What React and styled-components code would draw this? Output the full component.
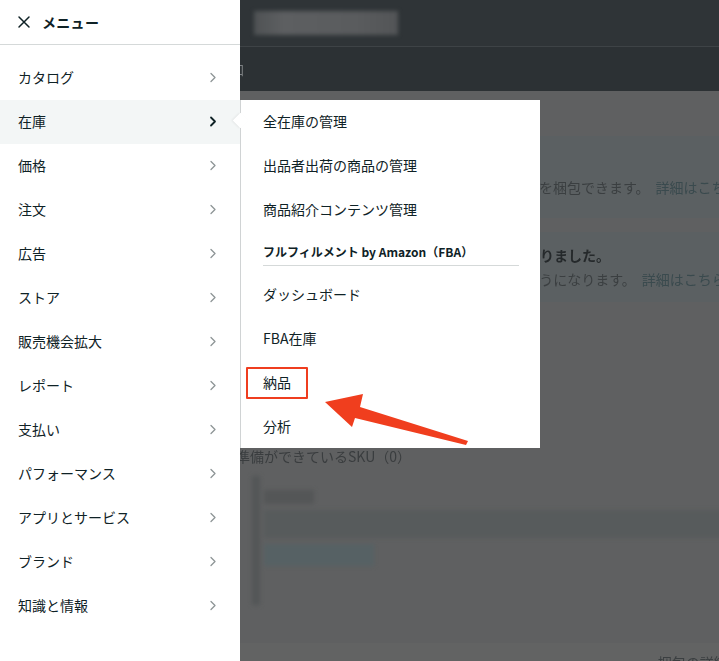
import React from 'react';
import styled, { createGlobalStyle } from 'styled-components';

const GlobalStyle = createGlobalStyle`
  html, body {
    margin: 0;
    padding: 0;
    background: #5f6061;
  }
  body {
    font-family: "Noto Sans CJK JP", "Noto Sans", sans-serif;
  }
`;

const Page = styled.div`
  position: relative;
  display: flex;
  width: 719px;
  height: 661px;
  overflow: hidden;
`;

const Sidebar = styled.aside`
  width: 240px;
  flex: none;
  background: #fff;
  display: flex;
  flex-direction: column;
`;

const SideHeader = styled.div`
  height: 44px;
  border-bottom: 1px solid #d5d9d9;
  display: flex;
  align-items: center;
  gap: 11px;
  padding-left: 17px;
`;

const Title = styled.span`
  font-size: 14px;
  font-weight: 700;
  color: #0f2226;
  letter-spacing: 0.3px;
`;

const MenuList = styled.ul`
  list-style: none;
  margin: 0;
  padding: 11px 0 0;
`;

const MenuRow = styled.li`
  height: 44px;
  display: flex;
  align-items: center;
  justify-content: space-between;
  padding: 0 23px 2px 18px;
  box-sizing: border-box;
  font-size: 14px;
  color: #0f2226;
  background: ${p => (p.$active ? '#f3f6f6' : 'transparent')};
`;

const Main = styled.main`
  flex: 1;
  display: flex;
  flex-direction: column;
  overflow: hidden;
`;

const TopBar = styled.div`
  height: 46px;
  background: #2f3437;
  border-bottom: 1px solid #3e4346;
  display: flex;
  align-items: center;
  padding-left: 14px;
`;

const BlurBox = styled.div`
  width: 144px;
  height: 24px;
  background: linear-gradient(90deg, #4f5254, #5d5f61 20%, #5a5c5e 70%, #535557);
  filter: blur(2px);
`;

const SubNav = styled.div`
  height: 44px;
  background: #2c3134;
  display: flex;
  align-items: center;
  margin-left: -9px;
`;

const NavText = styled.span`
  font-size: 13px;
  color: #7d8184;
  filter: blur(0.4px);
`;

const Content = styled.div`
  flex: 1;
  display: flex;
  flex-direction: column;
  padding-top: 9px;
  background: #5f6061;
`;

const InfoBox = styled.div`
  height: ${p => p.$h}px;
  margin-top: ${p => p.$mt}px;
  background: #5b6062;
  display: flex;
  flex-direction: column;
  justify-content: center;
  padding: ${p => p.$pt || 0}px 0 0 6px;
  box-sizing: border-box;
  gap: 4px;
`;

const BgText = styled.div`
  font-size: 14px;
  white-space: nowrap;
  color: ${p => (p.$bold ? '#25292b' : '#3b3f41')};
  font-weight: ${p => (p.$bold ? 700 : 400)};
  filter: blur(0.5px);
`;

const BgLink = styled.span`
  color: #3a4a4e;
  margin-left: 6px;
`;

const SkuLine = styled.div`
  margin-top: 144px;
  margin-left: -4px;
  font-size: 14px;
  color: #3a3d3f;
  white-space: nowrap;
  filter: blur(0.4px);
`;

const Card = styled.div`
  margin: 10px 0 0 12px;
  height: 115px;
  border-left: 8px solid #535657;
  display: flex;
  flex-direction: column;
  gap: 6px;
  padding: 14px 0 0 4px;
  filter: blur(2px);
`;

const Smudge = styled.div`
  width: ${p => p.$w}px;
  height: ${p => p.$h}px;
  background: ${p => p.$c};
`;

const FooterBand = styled.div`
  margin-top: auto;
  height: 18px;
  background: #626363;
  display: flex;
  justify-content: flex-end;
  overflow: hidden;
`;

const FooterText = styled.span`
  margin: 10px -26px 0 0;
  font-size: 14px;
  line-height: 18px;
  color: #3b3f41;
  white-space: nowrap;
  filter: blur(0.6px);
`;

const Flyout = styled.div`
  position: absolute;
  left: 240px;
  top: 100px;
  width: 300px;
  height: 348px;
  background: #fff;
  border-left: 1px solid #d0d3d4;
  box-sizing: border-box;
`;

const Pointer = styled.span`
  position: absolute;
  left: -6px;
  top: 15px;
  width: 11px;
  height: 11px;
  background: #fff;
  transform: rotate(45deg);
  box-shadow: -1px 1px 2px rgba(0, 0, 0, 0.06);
`;

const FlyItem = styled.div`
  position: relative;
  height: 44px;
  display: flex;
  align-items: center;
  padding: 0 0 2px 22px;
  box-sizing: border-box;
  font-size: 14px;
  color: #0f2226;
`;

const SectionHead = styled.div`
  margin: 0 21px 7px 22px;
  padding-top: 11px;
  height: 22px;
  line-height: 18px;
  font-size: 12px;
  font-weight: 700;
  color: #0f2226;
  border-bottom: 1px solid #d5d9d9;
`;

const Marker = styled.div`
  position: absolute;
  left: 246px;
  top: 367px;
  width: 62px;
  height: 32px;
  border: 2px solid #ef3d1f;
  box-sizing: border-box;
  border-radius: 1px;
`;

const Overlay = styled.svg`
  position: absolute;
  left: 0;
  top: 0;
  pointer-events: none;
`;

const Chevron = ({ active }) => (
  <svg width="8" height="11" viewBox="0 0 8 11" fill="none">
    <path
      d="M2 1.5l4 4-4 4"
      stroke={active ? '#0f2226' : '#8d9496'}
      strokeWidth={active ? 1.8 : 1.3}
      strokeLinecap="round"
      strokeLinejoin="round"
    />
  </svg>
);

const CloseIcon = () => (
  <svg width="14" height="14" viewBox="0 0 14 14" fill="none">
    <path d="M2 2l10 10M12 2L2 12" stroke="#0f2226" strokeWidth="1.5" strokeLinecap="round" />
  </svg>
);

const menu = [
  'カタログ', '在庫', '価格', '注文', '広告', 'ストア', '販売機会拡大',
  'レポート', '支払い', 'パフォーマンス', 'アプリとサービス', 'ブランド', '知識と情報',
];

export default function App() {
  return (
    <>
      <GlobalStyle />
      <Page>
        <Sidebar>
          <SideHeader>
            <CloseIcon />
            <Title>メニュー</Title>
          </SideHeader>
          <MenuList>
            {menu.map(m => (
              <MenuRow key={m} $active={m === '在庫'}>
                {m}
                <Chevron active={m === '在庫'} />
              </MenuRow>
            ))}
          </MenuList>
        </Sidebar>

        <Main>
          <TopBar>
            <BlurBox />
          </TopBar>
          <SubNav>
            <NavText>知</NavText>
          </SubNav>
          <Content>
            <InfoBox $h={82} $mt={36} $pt={20}>
              <BgText>
                出品者は納品する前に、次の手順に従って商品を梱包できます。
                <BgLink>詳細はこちら</BgLink>
              </BgText>
            </InfoBox>
            <InfoBox $h={70} $mt={14}>
              <BgText $bold>納品プランを作成するワークフローが新しくなりました。</BgText>
              <BgText>
                新しいワークフローで納品プランを作成するようになります。
                <BgLink>詳細はこちら</BgLink>
              </BgText>
            </InfoBox>
            <SkuLine>準備ができているSKU（0）</SkuLine>
            <Card>
              <Smudge $w={50} $h={14} $c="#545657" />
              <Smudge $w={460} $h={28} $c="#575b5c" />
              <Smudge $w={110} $h={22} $c="#566164" />
            </Card>
            <FooterBand>
              <FooterText>梱包の詳細 ○</FooterText>
            </FooterBand>
          </Content>
        </Main>

        <Flyout>
          <Pointer />
          <FlyItem>全在庫の管理</FlyItem>
          <FlyItem>出品者出荷の商品の管理</FlyItem>
          <FlyItem>商品紹介コンテンツ管理</FlyItem>
          <SectionHead>フルフィルメント by Amazon（FBA）</SectionHead>
          <FlyItem>ダッシュボード</FlyItem>
          <FlyItem>FBA在庫</FlyItem>
          <FlyItem>納品</FlyItem>
          <FlyItem>分析</FlyItem>
        </Flyout>

        <Marker />
        <Overlay width="719" height="661" viewBox="0 0 719 661">
          <polygon
            points="325,402 363,394 360,407 468,441 466,445 355,418 352,427"
            fill="#f03e1e"
          />
        </Overlay>
      </Page>
    </>
  );
}
